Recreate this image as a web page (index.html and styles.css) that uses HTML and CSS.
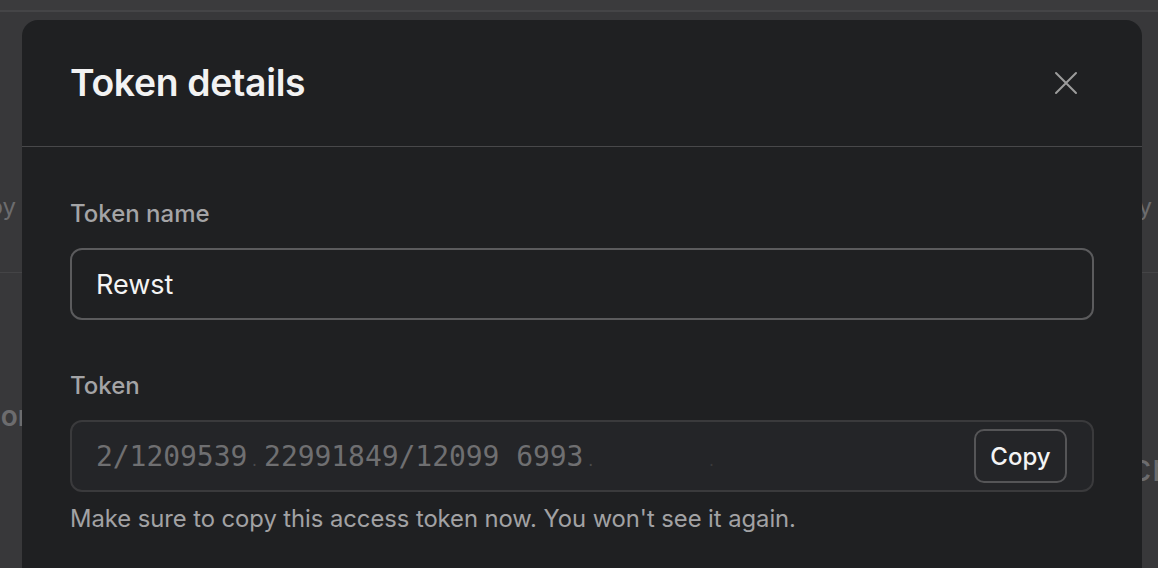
FILE: index.html
```html
<!DOCTYPE html>
<html lang="en">
<head>
<meta charset="utf-8">
<title>Token details</title>
<link rel="stylesheet" href="styles.css">
</head>
<body>
<div class="page">
  <div class="topbar"></div>
  <div class="bg-row bg-row-top">
    <div class="ghost-left"><span class="ghost-text">Copy</span></div>
    <div class="ghost-right"><span class="ghost-text">Copy</span></div>
  </div>
  <div class="bg-row bg-row-bottom">
    <div class="ghost-left ghost-left-2"><span class="ghost-bold">Con</span></div>
    <div class="ghost-right ghost-right-2"><span class="ghost-big">cret</span></div>
  </div>
</div>

<div class="modal" role="dialog" aria-labelledby="modal-title">
  <header class="modal-header">
    <h1 id="modal-title" class="modal-title">Token details</h1>
    <button class="close-btn" aria-label="Close">
      <svg width="24" height="24" viewBox="0 0 24 24" fill="none" stroke="currentColor" stroke-width="2" stroke-linecap="round">
        <path d="M2 2 L22 22 M22 2 L2 22"/>
      </svg>
    </button>
  </header>
  <div class="modal-body">
    <div class="field">
      <label class="field-label">Token name</label>
      <div class="input input-name">Rewst</div>
    </div>
    <div class="field field-token">
      <label class="field-label">Token</label>
      <div class="input input-token">
        <span class="token-text">2/1209539<span class="dim">.</span>22991849/12099 6993<span class="dim">.</span><span class="gap"></span><span class="dim faint">.</span></span>
        <button class="copy-btn">Copy</button>
      </div>
      <p class="helper">Make sure to copy this access token now. You won't see it again.</p>
    </div>
  </div>
</div>
</body>
</html>
```

FILE: styles.css
```css
* { box-sizing: border-box; }

html, body {
  margin: 0;
  padding: 0;
}

body {
  width: 1158px;
  height: 568px;
  overflow: hidden;
  background: #38383a;
  font-family: "Inter", "Noto Sans", sans-serif;
  position: relative;
}

/* ---------- background page (dimmed) ---------- */
.page {
  display: flex;
  flex-direction: column;
}

.topbar {
  height: 12px;
  background: #3b3b3d;
  border-bottom: 2px solid #454547;
}

.bg-row {
  display: flex;
  justify-content: space-between;
}

.bg-row-top {
  height: 261px;
  border-bottom: 1px solid #444446;
  padding-top: 180px;
}

.ghost-left {
  width: 22px;
  overflow: hidden;
  white-space: nowrap;
  display: flex;
  justify-content: flex-end;
  padding-right: 6px;
}

.ghost-right {
  width: 16px;
  overflow: hidden;
  white-space: nowrap;
  display: flex;
  justify-content: flex-end;
  padding-right: 6px;
}

.ghost-text {
  font-size: 24px;
  line-height: 30px;
  color: #6c6c6e;
  flex-shrink: 0;
}

.ghost-left-2 {
  justify-content: flex-start;
  padding-right: 0;
  margin-top: 126px;
}

.ghost-bold {
  font-size: 28px;
  font-weight: 600;
  line-height: 34px;
  color: #6c6c6e;
  margin-left: -20px;
  flex-shrink: 0;
}

.ghost-right-2 {
  justify-content: flex-start;
  padding-right: 0;
  margin-top: 172px;
}

.ghost-big {
  font-size: 38px;
  line-height: 44px;
  color: #6c6c6e;
  margin-left: -12px;
  flex-shrink: 0;
}

/* ---------- modal ---------- */
.modal {
  position: absolute;
  left: 22px;
  top: 20px;
  width: 1120px;
  height: 548px;
  overflow: hidden;
  background: #1f2022;
  border-radius: 16px 16px 0 0;
  display: flex;
  flex-direction: column;
}

.modal-header {
  height: 127px;
  flex-shrink: 0;
  display: flex;
  align-items: center;
  justify-content: space-between;
  padding: 0 64px 0 48px;
  border-bottom: 1px solid #48484a;
}

.modal-title {
  margin: 0;
  font-size: 37.3px;
  font-weight: 600;
  letter-spacing: -0.3px;
  color: #f2f2f2;
  line-height: 1;
}

.close-btn {
  width: 24px;
  height: 24px;
  padding: 0;
  border: 0;
  background: transparent;
  color: #9c9c9c;
  display: flex;
  align-items: center;
  justify-content: center;
}

.modal-body {
  padding: 52px 48px 0 48px;
  display: flex;
  flex-direction: column;
}

.field {
  display: flex;
  flex-direction: column;
}

.field-token {
  margin-top: 51px;
}

.field-label {
  font-size: 24px;
  font-weight: 500;
  color: #a4a4a6;
  line-height: 30px;
  margin-bottom: 19px;
}

.input {
  height: 72px;
  flex-shrink: 0;
  border-radius: 12px;
  display: flex;
  align-items: center;
  padding-left: 24px;
}

.input-name {
  border: 2px solid #5b5b5d;
  font-size: 27px;
  color: #f4f4f4;
}

.input-token {
  border: 2px solid #3a3a3c;
  background: #242528;
  justify-content: space-between;
  padding-right: 25px;
}

.token-text {
  font-family: "DejaVu Sans Mono", "Liberation Mono", monospace;
  font-size: 28px;
  color: #6f6f71;
  letter-spacing: -0.05px;
  white-space: pre;
}

.dim {
  color: #4a4a4c;
  font-size: 14px;
  display: inline-block;
  width: 16.8px;
  text-align: left;
  padding-left: 3px;
}

.gap {
  display: inline-block;
  width: 104px;
}

.faint {
  color: #3a3a3c;
}

.copy-btn {
  height: 54px;
  width: 93px;
  border: 2px solid #555557;
  border-radius: 10px;
  background: transparent;
  color: #f4f4f4;
  font-family: "Inter", "Noto Sans", sans-serif;
  font-size: 24px;
  font-weight: 500;
  padding: 0;
}

.helper {
  margin: 12px 0 0 0;
  font-size: 23.8px;
  letter-spacing: -0.05px;
  line-height: 30px;
  color: #a2a2a4;
}
```
